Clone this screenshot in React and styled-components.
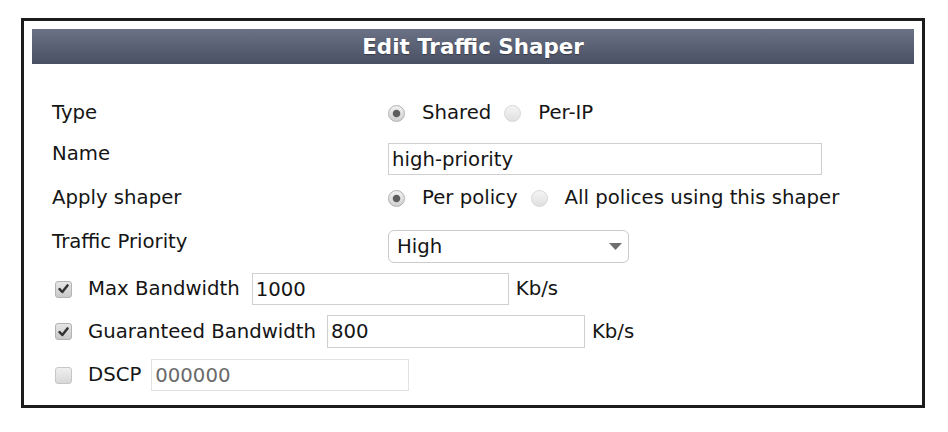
import React from 'react';
import styled, { createGlobalStyle } from 'styled-components';

const GlobalStyle = createGlobalStyle`
  html, body { margin: 0; padding: 0; background: #fff; }
  body { font-family: "DejaVu Sans", Verdana, sans-serif; color: #151515; }
`;

const Page = styled.div`
  padding: 18px 0 0 21px;
`;

const Panel = styled.div`
  box-sizing: border-box;
  width: 904px;
  height: 390px;
  border: 3px solid #1c1c1c;
  padding: 8px 8px 0;
  background: #fff;
`;

const Header = styled.div`
  height: 35px;
  display: flex;
  align-items: center;
  justify-content: center;
  background: linear-gradient(#6b7286, #4a5063);
  color: #fff;
  font-weight: bold;
  font-size: 21.4px;
  text-shadow: 0 1px 1px rgba(0, 0, 0, 0.35);
`;

const Form = styled.div`
  padding: 37px 0 0 20px;
  font-size: 19.7px;
`;

const FieldRow = styled.div`
  display: grid;
  grid-template-columns: 336px auto;
  align-items: start;
  margin-top: ${p => p.$gap || 0}px;
`;

const Label = styled.div`
  line-height: 24px;
  white-space: nowrap;
`;

const Options = styled.div`
  display: flex;
  align-items: center;
  height: 24px;
`;

const Radio = styled.span`
  box-sizing: border-box;
  flex: none;
  width: 17px;
  height: 17px;
  border-radius: 50%;
  margin-left: ${p => (p.$first ? 0 : 13)}px;
  margin-right: 17px;
  border: 1px solid ${p => (p.$checked ? '#b0b0b0' : '#d8d8d8')};
  background: ${p =>
    p.$checked
      ? 'radial-gradient(circle, #5e5e5e 0 3.3px, rgba(94,94,94,0) 4.2px), linear-gradient(#f1f1f1, #d0d0d0)'
      : 'linear-gradient(#f4f4f4, #e0e0e0)'};
`;

const OptionText = styled.span`
  line-height: 24px;
  white-space: nowrap;
`;

const TextInput = styled.input`
  box-sizing: border-box;
  width: ${p => p.$w}px;
  height: ${p => p.$h || 32}px;
  margin: ${p => p.$mt || 0}px 0 0 ${p => p.$ml || 0}px;
  padding: 0 3px;
  border: 1px solid ${p => (p.$muted ? '#e2e2e2' : '#cfcfcf')};
  border-radius: 0;
  background: #fff;
  font-family: "DejaVu Sans", Verdana, sans-serif;
  font-size: 19.7px;
  color: ${p => (p.$muted ? '#6a6a6a' : '#151515')};
  outline: none;
`;

const SelectBox = styled.div`
  box-sizing: border-box;
  width: 241px;
  height: 33px;
  display: flex;
  align-items: center;
  justify-content: space-between;
  padding: 0 6px 0 8px;
  border: 1px solid #cacaca;
  border-radius: 6px;
  background: #fff;
  line-height: 24px;
`;

const CheckRow = styled.div`
  display: flex;
  align-items: center;
  padding-left: 3px;
  margin-top: ${p => p.$gap}px;
`;

const CheckBox = styled.span`
  box-sizing: border-box;
  flex: none;
  width: 17px;
  height: 17px;
  margin-right: 16px;
  border-radius: 3px;
  border: 1px solid ${p => (p.$checked ? '#b3b3b3' : '#c6c6c6')};
  background: ${p => (p.$checked ? 'linear-gradient(#e6e6e6, #c9c9c9)' : 'linear-gradient(#efefef, #d8d8d8)')};
  display: flex;
  align-items: center;
  justify-content: center;
`;

const Unit = styled.span`
  margin-left: 7px;
  line-height: 24px;
`;

const Check = () => (
  <svg width="11" height="10" viewBox="0 0 11 10">
    <path d="M1.6 5.2 L4.3 8 L9.5 1.4" fill="none" stroke="#333" strokeWidth="2.5" strokeLinecap="round" strokeLinejoin="round" />
  </svg>
);

const Arrow = () => (
  <svg width="13" height="7" viewBox="0 0 13 7">
    <path d="M0 0 H13 L6.5 7 Z" fill="#6e6e6e" />
  </svg>
);

export default function App() {
  return (
    <>
      <GlobalStyle />
      <Page>
        <Panel>
          <Header>Edit Traffic Shaper</Header>
          <Form>
            <FieldRow>
              <Label>Type</Label>
              <Options>
                <Radio $first $checked />
                <OptionText>Shared</OptionText>
                <Radio />
                <OptionText>Per-IP</OptionText>
              </Options>
            </FieldRow>
            <FieldRow $gap={17}>
              <Label>Name</Label>
              <TextInput $w={434} $mt={1} readOnly defaultValue="high-priority" />
            </FieldRow>
            <FieldRow $gap={11}>
              <Label>Apply shaper</Label>
              <Options>
                <Radio $first $checked />
                <OptionText>Per policy</OptionText>
                <Radio />
                <OptionText>All polices using this shaper</OptionText>
              </Options>
            </FieldRow>
            <FieldRow $gap={20}>
              <Label>Traffic Priority</Label>
              <SelectBox>
                <span>High</span>
                <Arrow />
              </SelectBox>
            </FieldRow>
            <CheckRow $gap={10}>
              <CheckBox $checked><Check /></CheckBox>
              <Label>Max Bandwidth</Label>
              <TextInput $w={257} $ml={12} readOnly defaultValue="1000" />
              <Unit>Kb/s</Unit>
            </CheckRow>
            <CheckRow $gap={10}>
              <CheckBox $checked><Check /></CheckBox>
              <Label>Guaranteed Bandwidth</Label>
              <TextInput $w={258} $h={33} $ml={11} readOnly defaultValue="800" />
              <Unit>Kb/s</Unit>
            </CheckRow>
            <CheckRow $gap={11}>
              <CheckBox />
              <Label>DSCP</Label>
              <TextInput $w={258} $ml={10} $muted readOnly defaultValue="000000" />
            </CheckRow>
          </Form>
        </Panel>
      </Page>
    </>
  );
}
